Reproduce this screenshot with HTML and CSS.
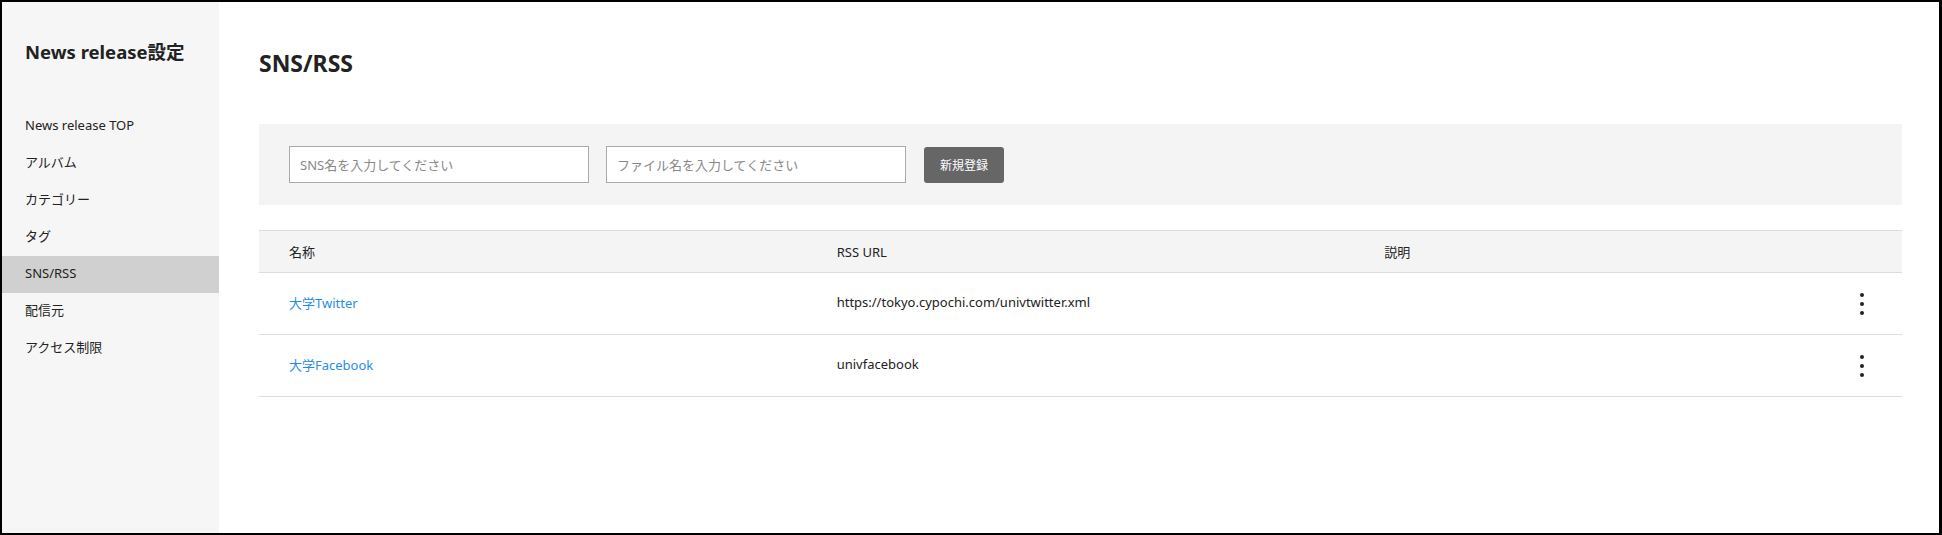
FILE: index.html
```html
<!DOCTYPE html>
<html lang="ja">
<head>
    <meta charset="UTF-8">
    <meta name="viewport" content="width=device-width, initial-scale=1.0">
    <title>SNS/RSS - News release設定</title>
    <link rel="stylesheet" href="styles.css">
</head>
<body>
    <div class="frame">
        <aside class="sidebar">
            <div class="sidebar-title">News release設定</div>
            <nav class="nav">
                <a class="nav-item" href="#">News release TOP</a>
                <a class="nav-item" href="#">アルバム</a>
                <a class="nav-item" href="#">カテゴリー</a>
                <a class="nav-item" href="#">タグ</a>
                <a class="nav-item active" href="#">SNS/RSS</a>
                <a class="nav-item" href="#">配信元</a>
                <a class="nav-item" href="#">アクセス制限</a>
            </nav>
        </aside>
        <main class="main">
            <h1>SNS/RSS</h1>
            <form class="add-form">
                <input type="text" class="text-input" placeholder="SNS名を入力してください">
                <input type="text" class="text-input" placeholder="ファイル名を入力してください">
                <button type="button" class="btn">新規登録</button>
            </form>
            <table class="list">
                <thead>
                    <tr>
                        <th>名称</th>
                        <th>RSS URL</th>
                        <th>説明</th>
                    </tr>
                </thead>
                <tbody>
                    <tr>
                        <td><a href="#">大学Twitter</a></td>
                        <td>https://tokyo.cypochi.com/univtwitter.xml</td>
                        <td class="desc"><span class="desc-text"></span><button type="button" class="kebab"><i></i><i></i><i></i></button></td>
                    </tr>
                    <tr>
                        <td><a href="#">大学Facebook</a></td>
                        <td>univfacebook</td>
                        <td class="desc"><span class="desc-text"></span><button type="button" class="kebab"><i></i><i></i><i></i></button></td>
                    </tr>
                </tbody>
            </table>
        </main>
    </div>
</body>
</html>
```

FILE: styles.css
```css
body {
    margin: 0;
    font-family: "Noto Sans", "Noto Sans CJK JP", sans-serif;
    color: #222;
    background-color: #fff;
}
.frame {
    display: flex;
    height: 535px;
    box-sizing: border-box;
    border: 2px solid #000;
    border-right-width: 3px;
}
.sidebar {
    width: 217px;
    flex-shrink: 0;
    background-color: #f6f6f6;
    padding-top: 38px;
}
.sidebar-title {
    padding-left: 23px;
    font-size: 18.5px;
    font-weight: bold;
    line-height: 24px;
}
.nav {
    margin-top: 44px;
}
.nav-item {
    display: block;
    height: 37px;
    line-height: 35px;
    padding-left: 23px;
    font-size: 13px;
    color: #222;
    text-decoration: none;
}
.nav-item.active {
    background-color: #d0d0d0;
}
.main {
    flex: 1;
    padding: 0 37px 0 40px;
}
h1 {
    margin: 46px 0 0;
    font-size: 23px;
    line-height: 30px;
    font-weight: bold;
}
.add-form {
    display: flex;
    align-items: center;
    margin-top: 46px;
    height: 81px;
    padding: 0 30px;
    background-color: #f4f4f4;
}
.text-input {
    width: 300px;
    height: 37px;
    box-sizing: border-box;
    margin-right: 17px;
    padding: 0 10px;
    border: 1px solid #aaa;
    font-family: inherit;
    font-size: 13px;
    color: #222;
    background-color: #fff;
}
.text-input::placeholder {
    color: #888;
}
.btn {
    width: 80px;
    height: 36px;
    margin-left: 1px;
    border: none;
    border-radius: 3px;
    background-color: #666;
    color: #fff;
    font-family: inherit;
    font-size: 12px;
    cursor: pointer;
}
.list {
    width: 100%;
    margin-top: 25px;
    border-collapse: collapse;
    table-layout: fixed;
    font-size: 13px;
}
.list th,
.list td {
    padding: 0 0 0 30px;
    text-align: left;
    border-bottom: 1px solid #ddd;
}
.list th {
    height: 41px;
    font-weight: normal;
    background-color: #f4f4f4;
    border-top: 1px solid #ddd;
}
.list td {
    height: 58px;
    padding-bottom: 3px;
    color: #222;
}
.list a {
    color: #1f8ee8;
    text-decoration: none;
}
.list td.desc {
    height: 61px;
    padding-right: 38px;
    padding-bottom: 0;
    text-align: right;
}
.desc-text {
    float: left;
}
.kebab {
    display: inline-flex;
    flex-direction: column;
    gap: 5px;
    padding: 0;
    margin: 0;
    border: none;
    background: none;
    vertical-align: middle;
    cursor: pointer;
}
.kebab i {
    display: block;
    width: 4px;
    height: 4px;
    border-radius: 50%;
    background-color: #222;
}
```
